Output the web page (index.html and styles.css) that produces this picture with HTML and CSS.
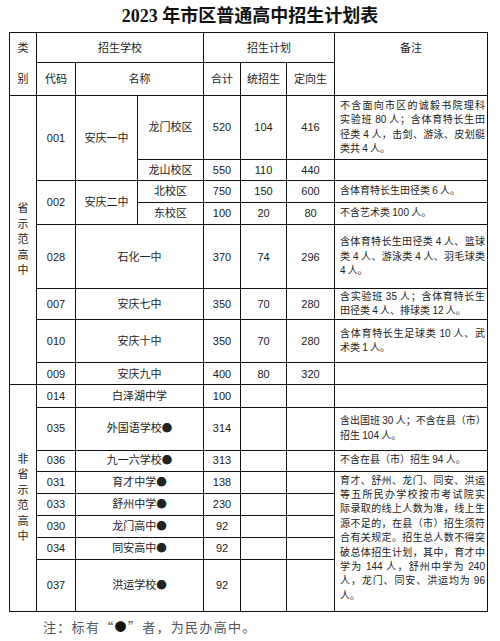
FILE: index.html
```html
<!DOCTYPE html>
<html lang="zh-CN">
<head>
<meta charset="utf-8">
<title>2023 年市区普通高中招生计划表</title>
<link rel="stylesheet" href="styles.css">
</head>
<body>
<div class="page">
  <h1 class="title">2023 年市区普通高中招生计划表</h1>
  <table class="plan">
    <colgroup>
      <col class="c-cat"><col class="c-code"><col class="c-name"><col class="c-campus"><col class="c-total"><col class="c-uni"><col class="c-dir"><col class="c-note">
    </colgroup>
    <thead>
      <tr class="h30">
        <th rowspan="2" class="cat-h">类<br>别</th>
        <th colspan="3">招生学校</th>
        <th colspan="3">招生计划</th>
        <th rowspan="2" class="note-h">备注</th>
      </tr>
      <tr class="h32">
        <th>代码</th><th colspan="2">名称</th><th>合计</th><th>统招生</th><th>定向生</th>
      </tr>
    </thead>
    <tbody>
      <tr class="h64">
        <td rowspan="8" class="cat">省<br>示<br>范<br>高<br>中</td>
        <td rowspan="2">001</td>
        <td rowspan="2">安庆一中</td>
        <td>龙门校区</td><td>520</td><td>104</td><td>416</td>
        <td class="rm"><span>不含面向市区的诚毅书院理科</span><span>实验班 80 人；含体育特长生田</span><span>径类 4 人，击剑、游泳、皮划艇</span><span>类共 4 人。</span></td>
      </tr>
      <tr class="h21">
        <td>龙山校区</td><td>550</td><td>110</td><td>440</td><td class="rm"></td>
      </tr>
      <tr class="h22">
        <td rowspan="2">002</td>
        <td rowspan="2">安庆二中</td>
        <td>北校区</td><td>750</td><td>150</td><td>600</td>
        <td class="rm"><span>含体育特长生田径类 6 人。</span></td>
      </tr>
      <tr class="h22">
        <td>东校区</td><td>100</td><td>20</td><td>80</td>
        <td class="rm"><span>不含艺术类 100 人。</span></td>
      </tr>
      <tr class="h64">
        <td>028</td><td colspan="2">石化一中</td><td>370</td><td>74</td><td>296</td>
        <td class="rm"><span>含体育特长生田径类 4 人、篮球</span><span>类 4 人、游泳类 4 人、羽毛球类</span><span>4 人。</span></td>
      </tr>
      <tr class="h31">
        <td>007</td><td colspan="2">安庆七中</td><td>350</td><td>70</td><td>280</td>
        <td class="rm"><span>含实验班 35 人；含体育特长生</span><span>田径类 4 人、排球类 12 人。</span></td>
      </tr>
      <tr class="h43">
        <td>010</td><td colspan="2">安庆十中</td><td>350</td><td>70</td><td>280</td>
        <td class="rm"><span>含体育特长生足球类 10 人、武</span><span>术类 1 人。</span></td>
      </tr>
      <tr class="h22">
        <td>009</td><td colspan="2">安庆九中</td><td>400</td><td>80</td><td>320</td>
        <td class="rm"></td>
      </tr>
      <tr class="h22">
        <td rowspan="8" class="cat">非<br>省<br>示<br>范<br>高<br>中</td>
        <td>014</td><td colspan="2">白泽湖中学</td><td>100</td><td></td><td></td>
        <td class="rm"></td>
      </tr>
      <tr class="h43">
        <td>035</td><td colspan="2">外国语学校<span class="dot">●</span></td><td>314</td><td></td><td></td>
        <td class="rm"><span>含出国班 30 人；不含在县（市）</span><span>招生 104 人。</span></td>
      </tr>
      <tr class="h21">
        <td>036</td><td colspan="2">九一六学校<span class="dot">●</span></td><td>313</td><td></td><td></td>
        <td class="rm"><span>不含在县（市）招生 94 人。</span></td>
      </tr>
      <tr class="h22">
        <td>031</td><td colspan="2">育才中学<span class="dot">●</span></td><td>138</td><td></td><td></td>
        <td rowspan="5" class="rm big"><span>育才、舒州、龙门、同安、洪运</span><span>等五所民办学校按市考试院实</span><span>际录取的线上人数为准，线上生</span><span>源不足的，在县（市）招生须符</span><span>合有关规定。招生总人数不得突</span><span>破总体招生计划，其中，育才中</span><span>学为 144 人，舒州中学为 240</span><span>人，龙门、同安、洪运均为 96</span><span>人。</span></td>
      </tr>
      <tr class="h22">
        <td>033</td><td colspan="2">舒州中学<span class="dot">●</span></td><td>230</td><td></td><td></td>
      </tr>
      <tr class="h22">
        <td>030</td><td colspan="2">龙门高中<span class="dot">●</span></td><td>92</td><td></td><td></td>
      </tr>
      <tr class="h22">
        <td>034</td><td colspan="2">同安高中<span class="dot">●</span></td><td>92</td><td></td><td></td>
      </tr>
      <tr class="h52">
        <td>037</td><td colspan="2">洪运学校<span class="dot">●</span></td><td>92</td><td></td><td></td>
      </tr>
    </tbody>
  </table>
  <p class="footnote">注：标有“<span class="fdot">●</span>”者，为民办高中。</p>
</div>
</body>
</html>
```

FILE: styles.css
```css
* { box-sizing: border-box; }
html, body { margin: 0; padding: 0; background: #fff; }
body { width: 500px; height: 641px; overflow: hidden; color: #222; }

.page { display: flex; flex-direction: column; }

.title {
  margin: 0;
  height: 32px;
  line-height: 32px;
  text-align: center;
  font-family: "Liberation Serif", "Noto Sans CJK SC", serif;
  font-size: 18px;
  font-weight: 700;
  color: #111;
}

.plan {
  margin-left: 9px;
  width: 479px;
  table-layout: fixed;
  border-collapse: separate;
  border-spacing: 0;
  border-left: 1px solid #111;
  border-top: 1px solid #111;
  font-family: "Liberation Sans", "Noto Sans CJK SC", sans-serif;
  font-size: 11px;
  color: #222;
}

.c-cat { width: 27px; }
.c-code { width: 39px; }
.c-name { width: 62px; }
.c-campus { width: 66px; }
.c-total { width: 37px; }
.c-uni { width: 46px; }
.c-dir { width: 48px; }
.c-note { width: 153px; }

.plan th, .plan td {
  border-right: 1px solid #111;
  border-bottom: 1px solid #111;
  padding: 0;
  text-align: center;
  vertical-align: middle;
  font-weight: 400;
  line-height: 14.4px;
  white-space: nowrap;
}

.h21 { height: 21px; }
.h22 { height: 22px; }
.h30 { height: 30px; }
.h31 { height: 31px; }
.h32 { height: 32px; }
.h43 { height: 43px; }
.h52 { height: 52px; }
.h64 { height: 64px; }

.plan .cat-h { line-height: 31px; }
.plan .note-h { vertical-align: top; line-height: 30px; }
.plan .cat { line-height: 15.5px; }

.plan .rm {
  text-align: left;
  padding: 0 2px 0 5px;
  font-size: 10px;
  word-spacing: -0.5px;
}
.rm span { display: block; }
.rm span:not(:last-child) { text-align-last: justify; }
.plan .big { vertical-align: top; padding-top: 2px; }

.dot { font-family: "Noto Sans CJK SC", sans-serif; font-size: 10.5px; }

.footnote {
  margin: 6px 0 0 43px;
  line-height: 20px;
  font-family: "Noto Sans CJK SC", sans-serif;
  font-size: 13px;
  letter-spacing: 1.3px;
  color: #555;
}
.fdot { font-size: 12px; color: #111; }
```
